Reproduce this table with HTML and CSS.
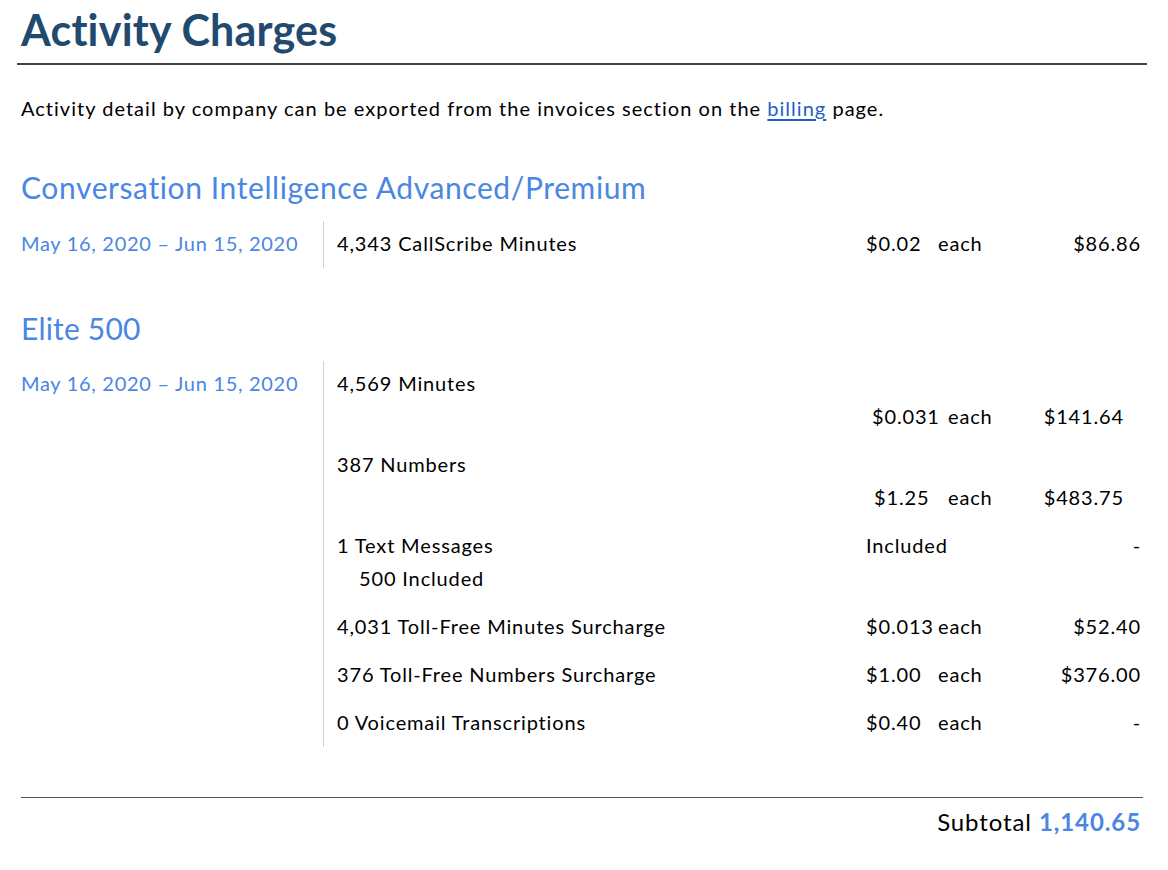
FILE: index.html
```html
<!DOCTYPE html>
<html lang="en">
<head>
<meta charset="utf-8">
<title>Activity Charges</title>
<link rel="stylesheet" href="styles.css">
</head>
<body>
<main class="page">
  <h1 class="title">Activity Charges</h1>
  <hr class="rule rule--top">
  <p class="intro">Activity detail by company can be exported from the invoices section on the <a class="link" href="#">billing</a> page.</p>

  <section class="product">
    <h2 class="product-name">Conversation Intelligence Advanced/Premium</h2>
    <div class="period">
      <div class="dates">May 16, 2020 – Jun 15, 2020</div>
      <div class="items">
        <div class="item">
          <div class="desc">4,343 CallScribe Minutes</div>
          <div class="unit">$0.02</div>
          <div class="each">each</div>
          <div class="total">$86.86</div>
        </div>
      </div>
    </div>
  </section>

  <section class="product">
    <h2 class="product-name product-name--short">Elite 500</h2>
    <div class="period">
      <div class="dates">May 16, 2020 – Jun 15, 2020</div>
      <div class="items">
        <div class="item item--split">
          <div class="desc">4,569 Minutes</div>
          <div class="unit">$0.031</div>
          <div class="each">each</div>
          <div class="total">$141.64</div>
        </div>
        <div class="item item--split">
          <div class="desc">387 Numbers</div>
          <div class="unit unit--narrow">$1.25</div>
          <div class="each">each</div>
          <div class="total">$483.75</div>
        </div>
        <div class="item">
          <div class="desc">1 Text Messages<span class="note">500 Included</span></div>
          <div class="unit">Included</div>
          <div class="each"></div>
          <div class="total">-</div>
        </div>
        <div class="item">
          <div class="desc">4,031 Toll-Free Minutes Surcharge</div>
          <div class="unit">$0.013</div>
          <div class="each">each</div>
          <div class="total">$52.40</div>
        </div>
        <div class="item">
          <div class="desc">376 Toll-Free Numbers Surcharge</div>
          <div class="unit">$1.00</div>
          <div class="each">each</div>
          <div class="total">$376.00</div>
        </div>
        <div class="item">
          <div class="desc">0 Voicemail Transcriptions</div>
          <div class="unit">$0.40</div>
          <div class="each">each</div>
          <div class="total">-</div>
        </div>
      </div>
    </div>
  </section>

  <hr class="rule rule--bottom">
  <div class="subtotal">Subtotal <strong class="subtotal-value">1,140.65</strong></div>
</main>
</body>
</html>
```

FILE: styles.css
```css
* { box-sizing: border-box; }

html, body {
  margin: 0;
  padding: 0;
  background: #ffffff;
}

body {
  font-family: Lato, "Open Sans", sans-serif;
  color: #000000;
}

.page {
  width: 1120px;
  margin-left: 21px;
}

.title {
  margin: 0;
  font-size: 43px;
  line-height: 56px;
  font-weight: 700;
  color: #224a6e;
  letter-spacing: 0.2px;
  padding-top: 2px;
}

.rule {
  border: 0;
  margin: 0;
  height: 1px;
}

.rule--top {
  background: #444444;
  height: 2px;
  margin: 5px -6px 0 -4px;
}

.intro {
  margin: 28px 0 0;
  font-size: 20px;
  line-height: 30px;
  letter-spacing: 1.02px;
}

.link {
  color: #1f5fc4;
  text-decoration: underline;
  text-underline-offset: 3px;
}

.product-name {
  margin: 44px 0 14px;
  font-size: 30px;
  line-height: 40px;
  font-weight: 400;
  color: #4a86e3;
  letter-spacing: 0.6px;
}

.product + .product .product-name {
  margin-top: 40px;
  margin-bottom: 13px;
}

.product-name--short {
  letter-spacing: 0.2px;
}

.period {
  display: grid;
  grid-template-columns: 302px minmax(0, 1fr);
}

.dates {
  font-size: 20px;
  line-height: 33px;
  letter-spacing: 0.7px;
  color: #4a86e3;
  padding-top: 6px;
}

.items {
  border-left: 1px solid #cfcfcf;
  padding: 6px 0 8px 13px;
  display: flex;
  flex-direction: column;
  gap: 15px;
}

.item {
  display: grid;
  grid-template-columns: 529px 72px minmax(0, 1fr) 110px;
  font-size: 20px;
  line-height: 33px;
  letter-spacing: 0.85px;
}

.desc { grid-column: 1; grid-row: 1; }
.unit { grid-column: 2; grid-row: 1; white-space: nowrap; }
.each { grid-column: 3; grid-row: 1; }
.total { grid-column: 4; grid-row: 1; text-align: right; white-space: nowrap; }

.note {
  display: block;
  padding-left: 22px;
}

.item--split {
  grid-template-columns: 535px 76px minmax(0, 1fr) 110px;
}

.item--split .desc {
  grid-column: 1 / -1;
}

.item--split .unit,
.item--split .each,
.item--split .total {
  grid-row: 2;
}

.item--split .total {
  padding-right: 17px;
}

.unit--narrow {
  padding-left: 2px;
}

.rule--bottom {
  background: #555555;
  height: 1px;
  margin: 50px -2px 0 0;
}

.subtotal {
  text-align: right;
  font-size: 24px;
  line-height: 34px;
  letter-spacing: 0.9px;
  margin-top: 7px;
}

.subtotal-value {
  color: #4a86e3;
  font-weight: 700;
}
```
